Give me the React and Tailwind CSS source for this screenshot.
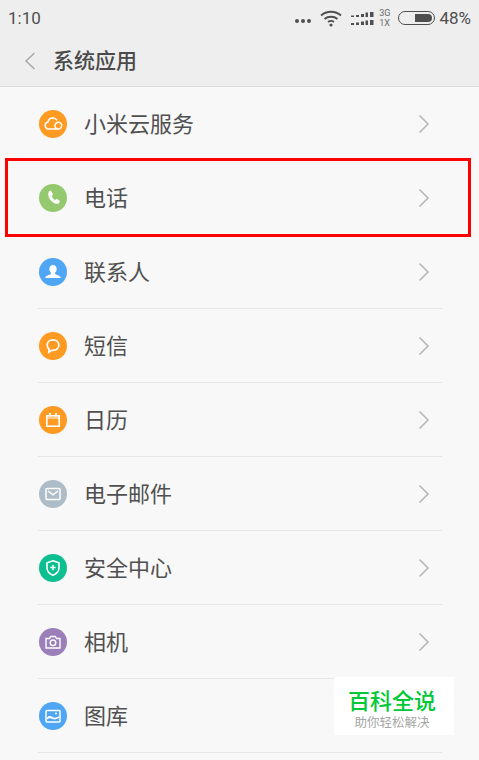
import React from "react";

const cjk = { fontFamily: '"Noto Sans CJK SC", sans-serif' };

// white glyphs inside the round app icons, drawn on a 28x28 box
const glyphs = {
  cloud: (
    <path d="M9.500 19h9.800a3.400 3.400 0 0 0 0-6.800c-1.800 0-3.300 1.500-3.300 3.400s1.500 3.400 3.300 3.400M9.500 19a3.600 3.600 0 0 1-.5-7.100 4.900 4.900 0 0 1 9-1.600" fill="none" stroke="#fff" strokeWidth="1.500" />
  ),
  phone: (
    <path d="M9.800 7.400 12 6.600l2 4-1.400 1.500c.6 1.700 1.800 3 3.500 3.900l1.500-1.300 3.300 2.300-.8 1.900c-.5.800-1.700 1.200-3 .8-4-1.200-7-4.500-7.800-8.500-.2-1.300.1-2.300.5-3.800Z" fill="#fff" />
  ),
  person: (
    <path d="M14 7c2.300 0 3.700 1.800 3.700 4 0 1.600-.7 3-1.600 3.800v1.100c0 .6 4.900 1.300 5.400 3.100v1H6.500v-1c.5-1.800 5.400-2.500 5.400-3.100v-1.100c-.9-.8-1.600-2.200-1.600-3.800C10.300 8.800 11.700 7 14 7Z" fill="#fff" />
  ),
  message: (
    <path d="M14 7.800c3.400 0 5.800 2.400 5.800 5.300s-2.400 5.300-5.800 5.300c-.5 0-1 0-1.400-.1L9.800 20.200l.3-3c-1.200-1-1.900-2.500-1.900-4.100 0-2.900 2.400-5.300 5.800-5.300Z" fill="none" stroke="#fff" strokeWidth="1.700" />
  ),
  calendar: (
    <g fill="none" stroke="#fff">
      <rect x="7.800" y="9.800" width="12.400" height="10.400" strokeWidth="1.600" />
      <path d="M11 7v3.500M17 7v3.500" strokeWidth="1.800" />
      <path d="M8 12h12" strokeWidth="1" />
    </g>
  ),
  mail: (
    <g fill="none" stroke="#fff">
      <rect x="7" y="8.500" width="14" height="11" rx="1" strokeWidth="1.500" />
      <path d="m9 11 5 3.800 5-3.800" strokeWidth="1.500" />
    </g>
  ),
  shield: (
    <g fill="none" stroke="#fff">
      <path d="M14 6.800 20 8.800v5.200c0 3.200-2.300 5.600-6 7.200-3.700-1.600-6-4-6-7.200V8.800L14 6.800Z" strokeWidth="1.600" />
      <path d="M14 11v5.200M11.400 13.600h5.200" strokeWidth="1.500" />
    </g>
  ),
  camera: (
    <g fill="none" stroke="#fff">
      <path d="M7 10.500h3.500l1.200-2h4.600l1.200 2H21v9.500H7Z" strokeWidth="1.400" />
      <circle cx="14" cy="14.800" r="2.800" strokeWidth="1.400" />
    </g>
  ),
  picture: (
    <g>
      <rect x="7" y="8.500" width="14" height="11.500" rx="1" fill="none" stroke="#fff" strokeWidth="1.500" />
      <path d="M8 15.500c2-1.800 3.500-1.800 5.500-.6s3.500 1 6.500-.6v1.800c-3 1.600-4.800 1.800-6.800.7-1.800-1-3.200-.9-5.200.6Z" fill="#fff" />
      <circle cx="17" cy="11.600" r="1" fill="#fff" />
    </g>
  ),
};

const apps = [
  { name: "小米云服务", color: "bg-[#ff9a22]", glyph: "cloud" },
  { name: "电话", color: "bg-[#95c96f]", glyph: "phone" },
  { name: "联系人", color: "bg-[#4ea6f5]", glyph: "person" },
  { name: "短信", color: "bg-[#ff9a22]", glyph: "message" },
  { name: "日历", color: "bg-[#ff9a22]", glyph: "calendar" },
  { name: "电子邮件", color: "bg-[#adbcc7]", glyph: "mail" },
  { name: "安全中心", color: "bg-[#0cbf90]", glyph: "shield" },
  { name: "相机", color: "bg-[#9a7fb8]", glyph: "camera" },
  { name: "图库", color: "bg-[#4ea6f5]", glyph: "picture" },
];

const Row = ({ app }) => {
  return (
    <div className="flex h-[74px] items-center border-b border-[#e6e6e6] pr-[12px]">
      <div className={`ml-[1px] flex h-[28px] w-[28px] shrink-0 items-center justify-center rounded-full ${app.color}`}>
        <svg width="28" height="28" viewBox="0 0 28 28">{glyphs[app.glyph]}</svg>
      </div>
      <span className="mb-[3px] ml-[17px] flex-1 text-[22px] leading-none text-[#505050]" style={cjk}>{app.name}</span>
      {app.name !== "图库" && (
        <svg width="12" height="20" viewBox="0 0 12 20" className="shrink-0">
          <path d="M1.500 1.500 10 10l-8.500 8.500" fill="none" stroke="#b5b5b5" strokeWidth="1.500" />
        </svg>
      )}
    </div>
  );
};

const App = () => {
  return (
    <div className="relative h-[760px] w-[479px] overflow-hidden bg-[#f8f8f8]">
      {/* STATUS BAR + TITLE */}
      <div className="h-[87px] border-b border-[#dcdcdc] bg-[#eeeeee]">
        <div className="flex h-[35px] items-center pl-[8px] pr-[8px] pt-[1px] text-[#4f4f4f]" style={{ fontFamily: '"Roboto", sans-serif' }}>
          <span className="text-[17px] leading-none">1:10</span>
          <div className="ml-auto flex items-center">
            <div className="flex gap-[2px] pt-[6px]">
              <span className="h-[4px] w-[4px] rounded-full bg-[#4f4f4f]" />
              <span className="h-[4px] w-[4px] rounded-full bg-[#4f4f4f]" />
              <span className="h-[4px] w-[4px] rounded-full bg-[#4f4f4f]" />
            </div>
            <svg width="22" height="17" viewBox="0 0 22 17" className="ml-[9px]">
              <g fill="none" stroke="#4f4f4f" strokeWidth="1.800">
                <path d="M1 5.500c5.500-5 14.500-5 20 0" />
                <path d="M4.500 9c3.500-3 9.500-3 13 0" />
                <path d="M8 12c1.700-1.300 4.300-1.300 6 0" />
              </g>
              <circle cx="11" cy="15" r="1.600" fill="#4f4f4f" />
            </svg>
            <svg width="25" height="15" viewBox="0 0 25 15" className="ml-[9px]">
              <g fill="#4f4f4f">
                <path d="M0 4.500h3v1.500H0zM5 4h3v2H5zM10 3h3v3h-3zM14.500 1.500H17V6h-2.500zM19 1h3.500v5H19z" />
                <path d="M0 12h3v2H0zM5 11.500h3V14H5zM10 10.500h3V14h-3zM14.500 9.500H17V14h-2.500zM19 9h3.500v5H19z" />
              </g>
            </svg>
            <div className="ml-[3px] flex flex-col text-[9px] leading-[10px] text-[#6a6a6a]">
              <span>3G</span>
              <span>1X</span>
            </div>
            <div className="ml-[8px] flex h-[14px] w-[37px] items-center justify-end rounded-full border border-[#4f4f4f] pr-[2px]">
              <div className="h-[8px] w-[17px] rounded-r-full rounded-l-[1px] bg-[#4f4f4f]" />
            </div>
            <span className="ml-[4px] text-[17px] leading-none">48%</span>
          </div>
        </div>
        <div className="flex h-[51px] items-center pl-[24px]">
          <svg width="12" height="18" viewBox="0 0 12 18">
            <path d="M10.500 1 2 9l8.500 8" fill="none" stroke="#a8a8a8" strokeWidth="1.500" />
          </svg>
          <span className="mb-[2px] ml-[17px] text-[21px] font-medium leading-none text-[#4a4a4a]" style={cjk}>系统应用</span>
        </div>
      </div>

      {/* APP LIST */}
      <div className="ml-[38px] mr-[37px]">
        {apps.map((app) => (
          <Row key={app.name} app={app} />
        ))}
      </div>

      {/* RED HIGHLIGHT BOX */}
      <div className="absolute left-[5px] top-[158px] h-[79px] w-[466px] border-[3px] border-[#ff0000]" />

      {/* WATERMARK */}
      <div className="absolute left-[334px] top-[677px] flex h-[58px] w-[120px] flex-col items-center bg-white pr-[4px] pt-[10px]" style={cjk}>
        <span className="text-[22px] font-medium leading-[24px] text-[#00c837]">百科全说</span>
        <span className="mt-[4px] text-[12.500px] leading-[14px] text-[#a5a5a5]">助你轻松解决</span>
      </div>
    </div>
  );
};

export default App;
